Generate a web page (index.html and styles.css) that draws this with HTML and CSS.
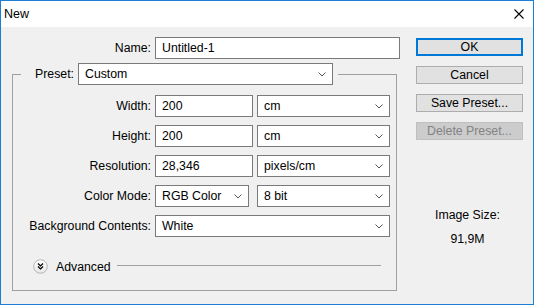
FILE: index.html
```html
<!DOCTYPE html>
<html lang="en">
<head>
    <meta charset="UTF-8">
    <title>New</title>
    <link rel="stylesheet" href="styles.css">
</head>
<body>

<div class="window">
    <!-- Title bar -->
    <div class="titlebar">
        <span class="title">New</span>
        <svg class="close" width="10" height="10" viewBox="0 0 10 10">
            <path d="M0.5 0.5 L9.5 9.5 M9.5 0.5 L0.5 9.5" stroke="#000" stroke-width="1.1" fill="none"/>
        </svg>
    </div>

    <div class="content">
        <!-- Form column -->
        <div class="form">
            <div class="name-row">
                <label class="label">Name:</label>
                <div class="field name-field">Untitled-1</div>
            </div>

            <fieldset class="group">
                <legend class="preset">
                    <label class="label preset-label">Preset:</label>
                    <div class="field select preset-select">
                        <span>Custom</span>
                        <svg class="chev" width="8" height="5" viewBox="0 0 8 5"><polyline points="0.5,0.5 4,4 7.5,0.5" fill="none" stroke="#555"/></svg>
                    </div>
                </legend>

                <div class="grid">
                    <label class="label">Width:</label>
                    <div class="field num">200</div>
                    <div class="field select">
                        <span>cm</span>
                        <svg class="chev" width="8" height="5" viewBox="0 0 8 5"><polyline points="0.5,0.5 4,4 7.5,0.5" fill="none" stroke="#555"/></svg>
                    </div>

                    <label class="label">Height:</label>
                    <div class="field num">200</div>
                    <div class="field select">
                        <span>cm</span>
                        <svg class="chev" width="8" height="5" viewBox="0 0 8 5"><polyline points="0.5,0.5 4,4 7.5,0.5" fill="none" stroke="#555"/></svg>
                    </div>

                    <label class="label">Resolution:</label>
                    <div class="field num">28,346</div>
                    <div class="field select">
                        <span>pixels/cm</span>
                        <svg class="chev" width="8" height="5" viewBox="0 0 8 5"><polyline points="0.5,0.5 4,4 7.5,0.5" fill="none" stroke="#555"/></svg>
                    </div>

                    <label class="label">Color Mode:</label>
                    <div class="field select mode">
                        <span>RGB Color</span>
                        <svg class="chev" width="8" height="5" viewBox="0 0 8 5"><polyline points="0.5,0.5 4,4 7.5,0.5" fill="none" stroke="#555"/></svg>
                    </div>
                    <div class="field select">
                        <span>8 bit</span>
                        <svg class="chev" width="8" height="5" viewBox="0 0 8 5"><polyline points="0.5,0.5 4,4 7.5,0.5" fill="none" stroke="#555"/></svg>
                    </div>

                    <label class="label">Background Contents:</label>
                    <div class="field select wide">
                        <span>White</span>
                        <svg class="chev" width="8" height="5" viewBox="0 0 8 5"><polyline points="0.5,0.5 4,4 7.5,0.5" fill="none" stroke="#555"/></svg>
                    </div>
                </div>

                <div class="advanced">
                    <svg class="adv-icon" width="15" height="15" viewBox="0 0 15 15">
                        <defs>
                            <linearGradient id="advbg" x1="0" y1="0" x2="0" y2="1">
                                <stop offset="0" stop-color="#ffffff"/>
                                <stop offset="1" stop-color="#e6e6e6"/>
                            </linearGradient>
                        </defs>
                        <circle cx="7.5" cy="7.5" r="6.8" fill="url(#advbg)" stroke="#b4b4b4"/>
                        <polyline points="5,4.5 7.5,7 10,4.5" fill="none" stroke="#000" stroke-width="1.2"/>
                        <polyline points="5,7.5 7.5,10 10,7.5" fill="none" stroke="#000" stroke-width="1.2"/>
                    </svg>
                    <span class="adv-text">Advanced</span>
                    <div class="adv-line"></div>
                </div>
            </fieldset>
        </div>

        <!-- Buttons column -->
        <div class="side">
            <button class="btn default">OK</button>
            <button class="btn">Cancel</button>
            <button class="btn">Save Preset...</button>
            <button class="btn" disabled>Delete Preset...</button>

            <div class="image-size">
                <div>Image Size:</div>
                <div>91,9M</div>
            </div>
        </div>
    </div>
</div>

</body>
</html>
```

FILE: styles.css
```css
body {
    margin: 0;
    padding: 0;
    background-color: #ffffff;
    font-family: "Liberation Sans", Arial, sans-serif;
    font-size: 12.3px;
    color: #000;
}

/* Window frame */
.window {
    box-sizing: border-box;
    width: 534px;
    height: 305px;
    border: 1px solid #1a7dd6;
    background-color: #f0f0f0;
    display: flex;
    flex-direction: column;
}
.titlebar {
    height: 26px;
    background-color: #ffffff;
    display: flex;
    align-items: center;
    justify-content: space-between;
    padding: 0 9px 0 3px;
}
.title {
    font-size: 12.5px;
}
.close {
    display: block;
}

/* Body */
.content {
    display: flex;
}
.form {
    width: 415px;
}
.label {
    text-align: right;
    white-space: nowrap;
}
.field {
    box-sizing: border-box;
    height: 22px;
    border: 1px solid #7a7a7a;
    background-color: #ffffff;
    padding: 0 6px;
    display: flex;
    align-items: center;
    white-space: nowrap;
}
.select {
    justify-content: space-between;
}
.chev {
    display: block;
    margin-right: 0;
}

/* Name row */
.name-row {
    display: grid;
    grid-template-columns: 150px 245px;
    column-gap: 4px;
    align-items: center;
    margin-top: 10px;
}

/* Preset group */
.group {
    box-sizing: border-box;
    width: 385px;
    margin: 4px 0 0 11px;
    padding: 10px 0 16px 0;
    border: 1px solid #a0a0a0;
    min-width: 0;
}
.preset {
    display: flex;
    align-items: center;
    margin-left: 8px;
    padding: 0 5px 0 8px;
}
.preset-label {
    width: 45px;
    margin-right: 4px;
}
.preset-select {
    width: 255px;
}
.grid {
    display: grid;
    grid-template-columns: 138px 98px 133px;
    column-gap: 4px;
    row-gap: 8px;
    align-items: center;
}
.mode {
    width: 94px;
}
.wide {
    grid-column: 2 / span 2;
}

/* Advanced toggle */
.advanced {
    display: flex;
    align-items: center;
    height: 15px;
    margin: 22px 15px 0 20px;
}
.adv-icon {
    display: block;
}
.adv-text {
    margin-left: 8px;
    margin-right: 6px;
}
.adv-line {
    flex: 1;
    height: 1px;
    background-color: #a0a0a0;
    margin-top: -2px;
}

/* Buttons */
.side {
    width: 107px;
    display: flex;
    flex-direction: column;
    gap: 10px;
    padding-top: 11px;
}
.btn {
    box-sizing: border-box;
    height: 18px;
    width: 107px;
    padding: 0;
    border: 1px solid #adadad;
    background-color: #e1e1e1;
    font-family: inherit;
    font-size: 12.3px;
    color: #000;
}
.btn.default {
    border: 2px solid #0078d7;
}
.btn:disabled {
    background-color: #cccccc;
    border-color: #bfbfbf;
    color: #838383;
}
.image-size {
    margin-top: 53px;
    margin-right: 4px;
    text-align: center;
    line-height: 24px;
}
```
